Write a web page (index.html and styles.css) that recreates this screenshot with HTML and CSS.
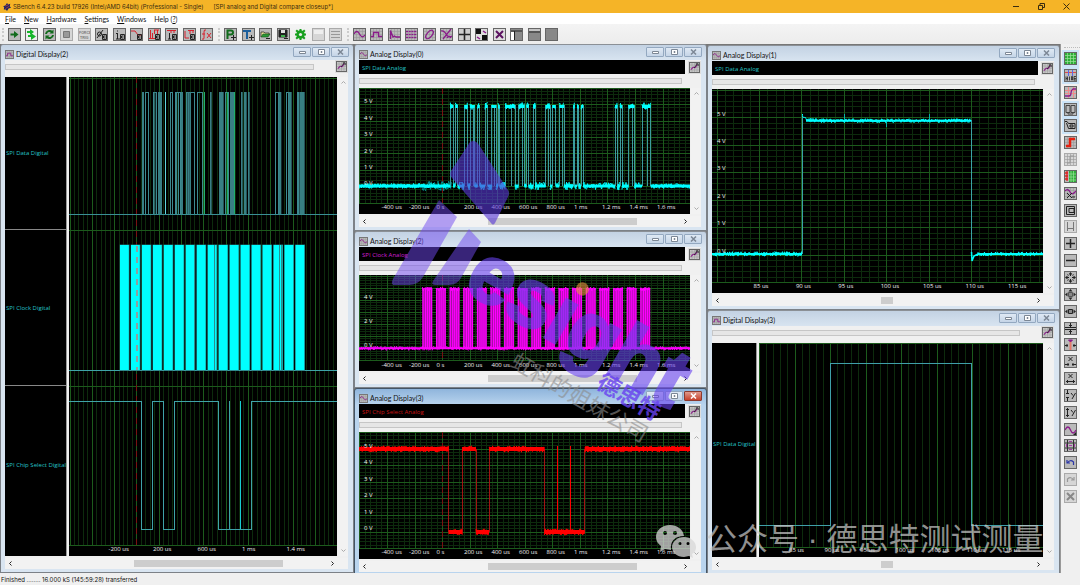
FILE: index.html
```html
<!DOCTYPE html>
<html lang="en">
<head>
    <meta charset="UTF-8">
    <meta name="viewport" content="width=device-width, initial-scale=1.0">
    <title>SBench 6.4.23</title>
    <link rel="stylesheet" href="styles.css">
</head>
<body>

    <!-- TITLE BAR -->
    <header class="app-title">
        <svg class="logo" viewBox="0 0 10 10"><path d="M5 0l1.500 2L9 1 8.500 4 10 6 7 7 5 10 3.500 8 1 8 1.500 5 0 4 3 3z" fill="#1c2563"/><path d="M3 4l4-2M3 7l5-3" stroke="#c33f3f"/></svg>
        <span class="app-name">SBench 6.4.23 build 17926 (Intel/AMD 64bit) (Professional - Single)</span>
        <span>[SPI analog and Digital compare closeup*]</span>
        <div class="app-buttons">
            <button aria-label="Minimize"><svg viewBox="0 0 7 7"><path d="M0 3.500h6"/></svg></button>
            <button aria-label="Restore"><svg viewBox="0 0 7 7"><path d="M.5 2.500h4v4h-4zM2 2V.5h4.500v4H5"/></svg></button>
            <button aria-label="Close"><svg viewBox="0 0 7 7"><path d="M.5.5l6 6M6.500.5l-6 6"/></svg></button>
        </div>
    </header>

    <!-- MENU -->
    <nav class="menu">
        <a href="#"><u>F</u>ile</a>
        <a href="#"><u>N</u>ew</a>
        <a href="#"><u>H</u>ardware</a>
        <a href="#"><u>S</u>ettings</a>
        <a href="#"><u>W</u>indows</a>
        <a href="#">Help (<u>?</u>)</a>
    </nav>

    <!-- TOOLBAR -->
    <div class="toolbar">
        <div class="group wide" data-icons="start loop refresh stop force calcA calcI calcCurve calcFft calcIr calcU calcFx"></div>
        <div class="group narrow" data-icons="newP newT open save gear blank lines"></div>
        <div class="group wide" data-icons="sine square decay bus ellipse eye quad checker closeAll layoutL layoutT layoutN"></div>
    </div>

    <!-- WORKSPACE -->
    <main class="main">
        <div class="workspace">
            <div class="column">
                <section class="window" data-title="Digital Display(2)" data-icon="square" data-chart="digital2"></section>
            </div>
            <div class="column three">
                <section class="window" data-title="Analog Display(0)" data-icon="sine" data-chart="analog0"></section>
                <section class="window" data-title="Analog Display(2)" data-icon="sine" data-chart="analog2"></section>
                <section class="window active" data-title="Analog Display(3)" data-icon="sine" data-chart="analog3"></section>
            </div>
            <div class="column two">
                <section class="window" data-title="Analog Display(1)" data-icon="sine" data-chart="analog1"></section>
                <section class="window" data-title="Digital Display(3)" data-icon="square" data-chart="digital3"></section>
            </div>
        </div>
        <aside class="dock">
            <div class="dock-group" data-icons="grid* hide* cross cursorBox* tag* step stepOff levels probe frame width plus minus zoomAll zoomBox zoomH zoomV marker xIn xOut yIn yOut wave pattern undo redo remove"></div>
        </aside>
    </main>

    <!-- STATUS BAR -->
    <footer class="status">Finished ........ 16.000 kS (145:59:28) transferred</footer>

    <!-- OVERLAY MARKS -->
    <div class="mark">
        <svg class="mark-shape" viewBox="0 0 130 150">
            <path d="M80 2q5-3 9 3l29 45q2 3 0 7l-13 26q-2 3-4 0L62 38q-3-3-1-7z" class="dark"/>
            <path d="M49 60l18 17-34 60q-5 8-14 8H5q-5 0-2-6z"/>
            <path d="M79 89l12 13-20 36q-4 7-12 7H45q-4 0-2-4z"/>
        </svg>
        <span class="mark-name">esıght</span>
        <span class="mark-dot"></span>
        <span class="mark-cn">德思特</span>
        <span class="mark-sub">虹科的姐妹公司</span>
    </div>
    <div class="account">
        <svg viewBox="0 0 42 36">
            <path fill-rule="evenodd" d="M15 1C7 1 1 6 1 13c0 4 2 7 5 9l-1 6 5-3 6 1C15 17 20 12 29 12 28 5 22 1 15 1zM10 7a2 2 0 1 1 0 4 2 2 0 0 1 0-4zm10 0a2 2 0 1 1 0 4 2 2 0 0 1 0-4z"/>
            <path fill-rule="evenodd" d="M29 13c-7 0-12 5-12 10s5 10 12 10l5-1 4 2-1-4c3-2 4-4 4-7 0-5-5-10-12-10zM25 18a1.500 1.500 0 1 1 0 3 1.500 1.500 0 0 1 0-3zm8 0a1.500 1.500 0 1 1 0 3 1.500 1.500 0 0 1 0-3z"/>
        </svg>
        <span>公众号 · 德思特测试测量</span>
    </div>

    <script src="script.js"></script>
</body>
</html>
```

FILE: styles.css
```css
* { margin: 0; padding: 0; box-sizing: border-box; }

body {
    height: 100vh; overflow: hidden; position: relative;
    display: flex; flex-direction: column;
    background: #f0f0f0; color: #111;
    font-family: "Open Sans", "Liberation Sans", sans-serif; font-size: 6px; line-height: 8px;
}

button { border: 0; background: none; font: inherit; display: block; }
svg { display: block; }

.app-title, .status { font-family: Inter, "Liberation Sans", sans-serif; }
.menu, .titlebar h2 { font-family: Lato, "Liberation Sans", sans-serif; font-size: 7px; }

/* TITLE BAR */
.app-title {
    height: 13px; background: #f5b427; color: #3a2c10;
    display: flex; align-items: center; gap: 10px; padding: 0 4px 0 3px;
}
.logo { width: 8px; height: 8px; margin-right: -8px; }
.app-buttons { margin-left: auto; display: flex; gap: 18px; padding-right: 6px; }
.app-buttons svg { width: 7px; height: 7px; fill: none; stroke: #3a2c10; }

/* MENU */
.menu {
    height: 11px; background: #fff; display: flex; align-items: center;
    gap: 8px; padding: 0 5px;
}
.menu a { color: #111; text-decoration: none; }

/* TOOLBAR */
.toolbar {
    height: 20px; display: flex; align-items: center; gap: 5px; padding-left: 2px;
    background: linear-gradient(#f4f4f4, #ececec);
}
.group { display: flex; justify-content: space-between; padding-left: 4px; border-left: 2px dotted #ccc; }
.wide { width: 211px; }
.narrow { width: 124px; }

.tool { width: 13px; height: 13px; border: 1px solid #666; background: #b9b9b9; }
.tool svg { width: 11px; height: 11px; fill: none; stroke: #222; }
.tool.off { border-color: #aaa; background: #d6d6d6; }
.tool.plain { border-color: transparent; background: none; }
.tool.on { outline: 2px solid #cce4f7; }
.tool text { stroke: none; font-family: "Liberation Sans", sans-serif; font-weight: bold; }

/* WORKSPACE */
.main { flex: 1; display: flex; min-height: 0; }
.workspace {
    flex: 1; display: grid; grid-template-columns: 354fr 353fr 353fr;
    background: #777; min-width: 0; overflow: hidden;
}
.column { display: grid; min-height: 0; min-width: 0; }
.three { grid-template-rows: 187fr 157fr 188fr; margin-bottom: -3px; }
.two { grid-template-rows: 265fr 264fr; padding-top: 1px; margin-bottom: -1px; }

.window {
    display: flex; flex-direction: column; min-height: 0; min-width: 0;
    border: 1px solid #7c8187; border-top-color: #8b9096; border-radius: 3px 3px 0 0;
    background: linear-gradient(#c3d2e3, #d9e5f1 16px);
    padding: 0 5px 3px 4px;
}
.window.active { background: linear-gradient(#8fb5dc, #b9d4ee 16px); border-color: #456; }

.titlebar { height: 15px; display: flex; align-items: center; padding-top: 3px; margin-right: -1px; }
.titlebar h2 { font-weight: normal; line-height: 9px; margin-left: 2px; flex: 1; }
.titlebar .tool { width: 9px; height: 9px; border-color: #777; }
.titlebar .tool svg { width: 7px; height: 7px; }
.win-button {
    width: 18px; height: 10px; margin: -4px 0 0 1px;
    border: 1px solid #93a8c0; border-radius: 1px;
    background: linear-gradient(#dfe9f4, #c5d5e7);
    display: flex; align-items: center; justify-content: center;
}
.win-button svg { width: 7px; height: 6px; fill: #fff; stroke: #7c8795; }
.active .win-button:last-child { background: linear-gradient(#e09a8c, #c8402a); border-color: #8c3a2e; }
.active .win-button:last-child svg { stroke: #fff; }

.client { flex: 1; min-height: 0; display: flex; flex-direction: column; background: #f0f0f0; }
.row { display: flex; align-items: center; }
.row .tool { width: 11px; height: 11px; margin: 0 1px 0 4px; background: #c8c8c8; outline: 1px solid #ddd; }
.row .tool svg { width: 9px; height: 9px; }
.caption { flex: 1; height: 14px; background: #000; padding: 4px 3px 2px; }
.progress { height: 6px; border: 1px solid #c6c6c6; background: #e6e6e6; }
.analog > .progress { margin: 4px 19px 4px 0; }
.digital .row { padding: 1px 0 5px; }
.digital .progress { flex: 1; margin-right: 18px; }

.plots { flex: 1; min-height: 0; display: flex; }
.names {
    width: 62px; margin-right: 2px; background: #000; border-right: 1px solid #999;
    display: grid; grid-template-rows: 153fr 156fr 170fr;
}
.names.single { width: 45px; grid-template-rows: 1fr; }
.names span { display: flex; align-items: center; padding-left: 1px; white-space: nowrap; border-bottom: 1px solid #888; }
.names span:last-child { border: 0; padding-bottom: 12px; }
.cyan { color: #25c3c8; }
.magenta { color: #d21fd2; }
.red { color: #cc1414; }

/* PLOT */
.plot { flex: 1; min-width: 0; position: relative; background: #000; overflow: hidden; }
.plot svg { position: absolute; width: 100%; height: 100%; fill: none; }
.plot path { vector-effect: non-scaling-stroke; }
.grid-minor { stroke: #0d2b0d; shape-rendering: crispEdges; }
.grid-major { stroke: #1c5a1c; shape-rendering: crispEdges; }
.trigger { stroke: #7a1212; stroke-dasharray: 6 5; shape-rendering: crispEdges; }
.edge { shape-rendering: crispEdges; }
.tick { position: absolute; color: #f2f2f2; white-space: nowrap; }
.tick.x { margin: -4px 0 0 -6px; }
.tick.y { left: 5px; margin-top: -4px; }

/* SCROLLBARS */
.vscroll { width: 10px; margin-left: 1px; display: flex; flex-direction: column; justify-content: space-between; align-items: center; padding: 3px 0; background: #f2f2f2; }
.hscroll { height: 11px; margin-top: 2px; display: flex; align-items: center; padding-right: 10px; background: #f2f2f2; }
.vscroll svg { width: 5px; height: 5px; fill: none; stroke: #aaa; }
.hscroll svg { width: 5px; height: 5px; fill: none; stroke: #222; }
.hscroll button { padding: 0 3px; }
.track { flex: 1; height: 7px; }
.thumb { height: 7px; background: #cdcdcd; }

/* DOCK */
.dock { width: 20px; padding: 3px 0 0 3px; border-left: 1px solid #999; background: #f0f0f0; }
.dock-group {
    height: 456px; display: flex; flex-direction: column; justify-content: space-between;
    border-top: 1px dotted #bbb; padding-top: 4px;
}

/* STATUS BAR */
.status { height: 12px; padding: 3px 1px 0; }

/* OVERLAY MARKS */
.mark, .account { position: absolute; pointer-events: none; white-space: nowrap; }
.mark { left: 390px; top: 140px; color: #6842f0; }
.mark-shape { width: 130px; height: 150px; fill: rgba(112, 72, 240, .5); }
.mark-shape .dark { fill: rgba(88, 56, 215, .62); }
.mark span { position: absolute; transform-origin: 0 0; transform: rotate(30deg); opacity: .6; }
.mark-name { left: 106px; top: 88px; font: bold 82px/84px "Liberation Sans", sans-serif; -webkit-text-stroke: 3px #6842f0; }
.mark-dot { left: 190px; top: 140px; width: 13px; height: 13px; border-radius: 50%; background: #ec923e; }
.mark .mark-cn { left: 216px; top: 228px; font: bold 23px/24px "Noto Sans CJK SC", sans-serif; opacity: .8; }
.mark .mark-sub { left: 130px; top: 207px; font: 22px/24px "Noto Sans CJK SC", sans-serif; color: #8c8c8c; }
.account {
    left: 655px; top: 520px; display: flex; align-items: center; gap: 9px;
    color: rgba(200, 200, 200, .72); font: 31px/40px "Liberation Sans", "Noto Sans CJK SC", sans-serif;
}
.account svg { width: 42px; height: 36px; fill: rgba(215, 215, 215, .75); margin-top: 4px; }
```

FILE: script.js
```js
// Toolbar and window icons, drawn on an 11 x 11 grid
const mesh = '<path d="M2.500 0v11M5.500 0v11M8.500 0v11M0 2.500h11M0 5.500h11M0 8.500h11" stroke="#999" stroke-width=".6"/>';
const badge = '<path d="M6.500 5.500h4v5h-4zM9.500 7h-2v2h2" stroke-width="1"/>';
const red = 'stroke="#d8232f"';
const purple = 'stroke="#8a1b8a" stroke-width="1.300"';

const icons = {
    start: '<path d="M1.500 4.500H5V2l4.500 3.500L5 9V6.500H1.500z" fill="#126b1c" stroke="none"/>',
    loop: '<path d="M0 0h11v11H0z" fill="#eee" stroke="none"/><path d="M1 2h3V0l4 3-4 3V4H1zM2 6h3V4l5 3.500L5 11V8H2z" fill="#15b52a" stroke="none"/>',
    refresh: '<path d="M2 5a3.500 3.500 0 0 1 6-2M9 6a3.500 3.500 0 0 1-6 2" stroke="#126b1c" stroke-width="2"/><path d="M9.500.5v4h-4zM1.500 10.500v-4h4z" fill="#126b1c" stroke="none"/>',
    stop: '<path d="M2.500 2.500h6v6h-6z" fill="#999" stroke="#777"/>',
    force: '<text x="0" y="5" font-size="3.500" fill="#777">FORCE</text><text x="1" y="9.500" font-size="3.500" fill="#777">TRIG</text>',
    calcA: '<path d="M1 9L7 1M1.500 5a2 2 0 1 0 4 0 2 2 0 0 0-4 0"/>' + badge,
    calcI: '<path d="M3.500 4v6M2 4.500h2M2 10h4M3 2h1"/>' + badge,
    calcCurve: `<path d="M0 2h4l3 4h4" ${red}/>` + badge,
    calcFft: `<path d="M1.500 1v8M3.500 4v5M0 9.500h6M5 1h5M5.500 1v4M8.500 1v4" ${red}/>` + badge,
    calcIr: `<path d="M3.500 4v6M2 10h3"/><path d="M1 1.500h9M5 1v3M8 1v3" ${red}/>` + badge,
    calcU: `<path d="M1 2v7h4M4 1.500h6M6 1v4M9 1v3" ${red}/>` + badge,
    calcFx: `<path d="M1 5h3M5 1q-2-1-2 2v6q0 2-2 1M6 4l4 5M10 4L6 9" ${red}/>`,
    newP: '<path d="M2.500 10V1.500H6q2 0 2 2t-2 2H3" stroke="#126b1c" stroke-width="2"/><path d="M8.500 6v5M6 8.500h5"/>',
    newT: '<path d="M0 2h8M4 1v9" stroke="#1c5f9c" stroke-width="2"/><path d="M8.500 6v5M6 8.500h5"/>',
    open: '<path d="M1 8V3h3l1 1h4v2" fill="#e9e19a" stroke-width=".7"/><path d="M1 8l2-3h7L8 8z" fill="#2a9a36" stroke="#174d1c" stroke-width=".6"/><path d="M6 9.500h4"/>',
    save: '<path d="M1 1h8v7H1z" fill="#222"/><path d="M3 1h4v3H3z" fill="#ddd" stroke="none"/><path d="M3 6h4v2H3z" fill="#3fae4a" stroke="none"/><path d="M6 9.500h4" stroke="#222"/>',
    gear: '<path d="M5.500-.5v12M-.5 5.500h12M1.200 1.200l8.600 8.600M9.800 1.200L1.200 9.800" stroke="#18a01f" stroke-width="2"/><circle cx="5.500" cy="5.500" r="3" stroke="#18a01f" stroke-width="2.500"/><circle cx="5.500" cy="5.500" r="1.600" fill="#eee" stroke="none"/>',
    blank: '<path d="M1 1h9v4H1z" fill="#eee" stroke="none"/>',
    lines: '<path d="M1 2.500h9M1 5.500h9M1 8.500h9" stroke="#999"/>',
    sine: mesh + `<path d="M0 5q3-5 5.500 0T11 6" ${purple}/>`,
    square: mesh + `<path d="M0 7.500h2.500v-4h5v4H11" ${purple}/>`,
    decay: mesh + `<path d="M1.500 10V1.500L4 8l1.500-1L7 8h4" ${purple}/>`,
    bus: mesh + `<path d="M0 2.500h11M0 5.500h11M0 8.500h11" ${purple} stroke-dasharray="2 .7"/>`,
    ellipse: mesh + `<ellipse cx="5.500" cy="5.500" rx="5" ry="2.500" transform="rotate(-50 5.500 5.500)" ${purple}/>`,
    eye: mesh + `<path d="M0 2q3-1 5 3t6 2M10 0L2 10M6 9q2-3 4 0" ${purple}/>`,
    quad: '<path d="M0 0h11v11H0z" fill="#ccc" stroke="none"/><path d="M5.500 0v11M0 5.500h11" stroke-width="1.600"/>',
    checker: '<path d="M0 0h11v11H0z" fill="#ddd" stroke="none"/><path d="M0 0h5v5H0zM6 6h5v5H6z" fill="#111" stroke="none"/><path d="M7 2l3 2M1 8l3 2" stroke="#8a1b8a" stroke-width="1.500"/>',
    closeAll: '<path d="M0 0h11v11H0z" fill="#ddd" stroke="none"/><path d="M2 2l7 7M9 2L2 9" stroke="#5b1260" stroke-width="2"/>',
    layoutL: '<path d="M0 0h11v11H0z" fill="#888" stroke="none"/><path d="M0 3h3v8H0z" fill="#fff" stroke="none"/><path d="M0 2h11M3.500 2v9" />',
    layoutT: '<path d="M0 0h11v11H0z" fill="#888" stroke="none"/><path d="M0 1h11" stroke="#fff"/><path d="M0 3h11"/>',
    layoutN: '<path d="M0 0h11v11H0z" fill="#888" stroke="none"/>',
    grid: '<path d="M0 0h11v11H0z" fill="#2fae38" stroke="none"/><path d="M2.500 0v11M5.500 0v11M8.500 0v11M0 2.500h11M0 5.500h11M0 8.500h11" stroke="#9be29b" stroke-width=".7"/>',
    hide: '<path d="M0 2.500h11" stroke="#e04a4a"/><path d="M3.500 0v6M7.500 0v6" stroke="#5968e8"/><path d="M1 6.500v4M1 8.500h1.500M2.500 6.500v4M4.500 6.500v4M6.500 6.500h1v3.500h-1zM9 6.500h2M9 8.500h2M9 10h2M9 6.500v4" stroke-width=".8"/>',
    cross: '<path d="M0 3.500h11M0 6.500h11M3.500 0v11M8.500 0v11" stroke="#f08a8a"/>' + `<path d="M0 9h4q2 0 2-3t2-4h3" ${purple}/>`,
    cursorBox: '<path d="M1 1.500h4v7H1zM6 1.500h4v7H6zM3 8v2h5V8" stroke="#444"/>',
    tag: '<path d="M0 1.500h2l1.500 2H10v5H3.500L1.500 3M5 5h3v2H5z"/>',
    step: mesh + '<path d="M1 9h4V2h5" stroke="#e5200e" stroke-width="2.500"/>',
    stepOff: mesh + '<path d="M2 9h3V2h4" stroke="#999"/>',
    levels: '<path d="M4 0h7v11H4z" fill="#2fae38" stroke="none"/><path d="M6 0v11M8.500 0v11M4 3h7M4 6h7M4 9h7" stroke="#9be29b" stroke-width=".7"/><path d="M0 2h3M0 5h3M0 8h3M2 0v10" stroke="#e02020" stroke-width="1.300"/>',
    probe: mesh + `<path d="M0 3q3-3 5 1t6-1" ${purple}/><path d="M2 5l5 5M7 5l-5 5M7 9h3"/>`,
    frame: '<path d="M1.500 1.500h8v8h-8zM4 3.500h5v4H4z"/>',
    width: '<path d="M2.500 1v9M8.500 1v9M3 7.500h5" stroke="#777"/>',
    plus: '<path d="M5.500 1v9M1 5.500h9" stroke-width="1.500"/>',
    minus: '<path d="M1 5.500h9" stroke-width="1.500"/>',
    zoomAll: '<path d="M5.500 0l2 2.500h-4zM5.500 11l-2-2.500h4zM0 5.500l2.500-2v4zM11 5.500l-2.500-2v4z" fill="#222" stroke="none"/><path d="M5.500 2v2M5.500 7v2M2 5.500h2M7 5.500h2"/><path d="M2.500 2.500l1 1M8.500 2.500l-1 1M2.500 8.500l1-1M8.500 8.500l-1-1"/>',
    zoomBox: '<path d="M3.500 3.500h4v4h-4z" fill="#888" stroke="#555"/><path d="M5.500 0l2 2.500h-4zM5.500 11l-2-2.500h4zM0 5.500l2.500-2v4zM11 5.500l-2.500-2v4z" fill="#222" stroke="none"/>',
    zoomH: '<path d="M3.500 3.500h4v4h-4z" fill="#888"/><path d="M0 5.500l2.500-2v4zM11 5.500l-2.500-2v4z" fill="#222" stroke="none"/>',
    zoomV: '<path d="M0 4.500h11M0 6.500h11M5.500 0v4M5.500 7v4M4 2.500h3M4 8.500h3"/>',
    marker: '<path d="M5.500 2v9" stroke="#e87a6a" stroke-width="2"/><path d="M3.500 1h4L5.500 3z" fill="#8a1b8a" stroke="#8a1b8a"/><path d="M0 6.500h3M8 6.500h3M2 5v3M9 5v3"/>',
    xIn: '<path d="M3.500 1l4 4M7.500 1l-4 4M0 8.500h4M7 8.500h4M3 7v3M8 7v3"/>',
    xOut: '<path d="M3.500 1l4 4M7.500 1l-4 4M1 8.500h9M2.500 7v3M8.500 7v3"/>',
    yIn: '<path d="M2.500 0v4M2.500 7v4M1 3.500h3M1 7.500h3M6 3l2 2.500M10.500 3L7 9"/>',
    yOut: '<path d="M2.500 1v9M1 2.500h3M1 8.500h3M6 3l2 2.500M10.500 3L7 9"/>',
    wave: `<path d="M0 6q3-6 5.500 0T11 6" ${purple}/><path d="M8 11h3V8z" fill="#222" stroke="none"/>`,
    pattern: '<path d="M2.500 0v11M8.500 0v11M0 3h11M0 8h11" stroke="#333"/><path d="M4 1.500h3M4 9.500h3M1.500 4v3M9.500 4v3M4 5.500h3" stroke="#a33ba3"/>',
    undo: '<path d="M2 3v3h3M2.500 6Q5 2 8.500 5v3" stroke="#2b36a8" stroke-width="1.200"/>',
    redo: '<path d="M9 3v3H6M8.500 6Q6 2 2.500 5v3" stroke="#999" stroke-width="1.200"/>',
    remove: '<path d="M2 2l7 7M9 2L2 9" stroke="#888" stroke-width="2"/>',
    options: mesh + `<path d="M1 8l3-3 2 1 3-4" ${purple}/><path d="M7 1h3v3M5 6l4-5"/>`
};
const off = ['stop', 'force', 'blank', 'lines', 'stepOff', 'width', 'redo', 'remove'];

function tool(name, on) {
    const state = (off.includes(name) ? ' off' : '') + (name === 'gear' ? ' plain' : '') + (on ? ' on' : '');
    return `<button class="tool${state}" aria-label="${name}"><svg viewBox="0 0 11 11">${icons[name]}</svg></button>`;
}

document.querySelectorAll('[data-icons]').forEach(el => {
    el.innerHTML = el.dataset.icons.split(' ').map(n => tool(n.replace('*', ''), n.endsWith('*'))).join('');
});

// Repeatable noise so the traces look the same on each load
let seed = 7;
function rnd() {
    seed = (seed * 16807) % 2147483647;
    return seed / 2147483647;
}
function noise(x0, x1, y, amp, step = 0.5) {
    let d = '';
    for (let x = x0; x <= x1; x += step) d += `${d ? 'L' : 'M'}${x.toFixed(1)} ${(y + (rnd() - 0.5) * 2 * amp).toFixed(1)}`;
    return d;
}
const path = (d, color, width = 1, cls = '') => `<path class="${cls}" d="${d}" stroke="${color}" stroke-width="${width}"/>`;
const third = (list, base) => list.map(p => p.map(v => base + v / 3));

// Pulses as [start, end, filled]
function digitalData() {
    const p = [[426, 432, 1], [436, 446], [460, 470], [463, 466, 1], [474, 486, 1], [510, 518], [526, 540], [530, 534], [543, 549, 1],
        [558, 584], [562, 568, 1], [568, 573, 1], [592, 608], [630, 635, 1], [657, 671, 1], [675, 684], [690, 705, 1], [723, 728, 1], [732, 740, 1],
        [744, 749, 1], [826, 834], [836, 844, 1], [858, 866], [866, 875, 1], [891, 896], [898, 914, 1]];
    let out = path('M69 214.500H337', '#3a8f95', 1, 'edge');
    p.forEach(([a, b, fill]) => {
        a /= 3; b /= 3;
        out += fill ? `<rect x="${a}" y="92" width="${b - a}" height="122" fill="#387f84"/>`
            : path(`M${a} 214V92.500H${b}V214`, '#3d8a90', 1, 'edge');
    });
    out += path('M165.500 92V214', '#5fd6dc', 1, 'edge') + path('M204.500 92V214', '#1faf6c', 1, 'edge');
    return out + path('M227.500 92V214M234.500 92V214', '#1faf6c', 1, 'edge');
}
function digitalClock() {
    let out = path('M69 370.500H337', '#3fa3a8', 1, 'edge');
    for (let i = 0; i < 17; i++) {
        const x = 119.700 + i * 10.970;
        out += `<rect x="${x}" y="244.500" width="9.800" height="126" fill="#1f6f70"/><rect x="${x + 0.3}" y="245" width="8.800" height="125" fill="#0ff"/>`;
    }
    return out + path('M194 245V370M214.500 245V370M279.500 245V370M281.500 245V370', '#2a8f90', 1, 'edge')
        + path('M137 246V370', '#8f9f9f', 1.500, 'edge').replace('<path', '<path stroke-dasharray="6 5"');
}
function analogPulses() {
    const p = third([[301, 309], [316, 323], [343, 353], [360, 374], [383, 389], [405, 413], [425, 438], [444, 449], [466, 495], [506, 523],
        [530, 536], [550, 556], [587, 600], [607, 617], [628, 642], [670, 674], [681, 686], [693, 699], [795, 802], [810, 816], [836, 853], [876, 902]], 350);
    let edges = '', tops = '', base = '', solid = '', x = 359;
    p.forEach(([a, b]) => {
        edges += `M${a} 186V105H${b}V186`;
        if (b - a > 4) edges += `M${(a + b) / 2 + 1} 186V105`;
        tops += noise(a, b, 106, 3.500);
        base += noise(x, a, 186, x < 360 ? 1.500 : 4);
        solid += `M${x} 186H${a}M${a} 106.500H${b}`;
        x = b;
    });
    solid += `M${x} 186H691`;
    return path(edges, '#3c9c9e', 1, 'edge') + path(noise(422, 452, 186, 5, .7), '#0aa', .7)
        + path(solid, '#0ff', 3) + path(tops + base, '#0ff', 1) + path(noise(x, 691, 186, 2.500), '#0ff')
        + path(noise(359, 450, 186, 2.500), '#0ff');
}
function clockBursts() {
    let lines = '', tops = '', glow = '';
    for (let i = 0; i < 17; i++) {
        const a = 422.500 + i * 13.620;
        glow += `<rect x="${a}" y="287" width="9.800" height="60" fill="#a010a0"/>`;
        [0.5, 3, 5, 7, 9].forEach(o => lines += `M${a + o} 347V287`);
        tops += noise(a, a + 9.800, 288, 2);
    }
    return glow + path(lines, '#f0f', 1.300) + path(tops, '#f0f')
        + path('M359 347.300H691', '#f0f', 2) + path(noise(359, 691, 347.300, 2), '#f0f', .8);
}
function chipSelect() {
    const hi = third([[27, 296], [337, 378], [417, 583], [704, 1022]], 350);
    const lo = third([[296, 337], [378, 417], [583, 704]], 350);
    let d = '', e = '', solid = '';
    hi.forEach(([a, b]) => { d += noise(a, b, 449, 3.200, .4); solid += `M${a} 449H${b}`; });
    lo.forEach(([a, b]) => { d += noise(a, b, 532, 3.200, .4); solid += `M${a} 532H${b}`; e += `M${a} 449V532M${b} 449V532`; });
    return path(e, '#a31414', 1, 'edge') + path('M557.500 446V532M570.500 446V532', '#f00')
        + path(solid, '#f00', 4) + path(d, '#f00');
}
function dataPulse() {
    let top = 'M802.500 114';
    for (let x = 802.500; x < 971; x += .5) top += `L${x} ${(120.700 - 5 * Math.exp((802 - x) / 5) + (rnd() - .5) * 4).toFixed(1)}`;
    return path('M802.500 254V116M971.500 120V258', '#3aa3a6', 1, 'edge') + path(top, '#0ff')
        + path('M712 254H802M806 120.700H971M978 254H1044', '#0ff', 2)
        + path(noise(712, 802, 254, 2.300), '#0ff') + path('M971.500 252L972 261L974 256L978 254', '#0ff', 1.500) + path(noise(976, 1044, 254, 2), '#0ff')
        + path('M844.500 114v6M929.500 114v6M886.500 121v6', '#0cc', .8);
}

// One entry per display; box is [x, y, width, height] of the drawing area
const timeTicks = [['-400 us', 387.500], ['-200 us', 415], ['0 s', 442.500], ['200 us', 470], ['400 us', 497.500], ['600 us', 525], ['800 us', 552.500], ['1 ms', 580], ['1.2 ms', 608], ['1.4 ms', 635.500], ['1.6 ms', 663]];
const volts = (top, step, n, by = 1) => Array.from({ length: n }, (_, i) => [`${(n - 1 - i) * by} V`, top + i * step]);
const charts = {
    digital2: {
        box: [69, 77, 268, 479], names: ['SPI Data Digital', 'SPI Clock Digital', 'SPI Chip Select Digital'], bottom: 545,
        gx: [92.300, 22.300], lines: [78, 230.500, 386.500], trigger: 136.500, labelY: 549.500, thumb: [38, 48],
        ticks: [['-200 us', 114.500], ['200 us', 159], ['600 us', 203.500], ['1 ms', 248], ['1.4 ms', 292.500]],
        draw: () => digitalData() + digitalClock() + path('M69 401.500H141.500V529.500H152.500V401.500H163.500V529.500H174.500V401.500H218.500V529.500H251.500V401.500H337M229.500 401V529', '#3fa3a8', 1, 'edge') + path('M240.500 401V529', '#18cdd2', 1, 'edge')
    },
    analog0: {
        box: [359, 88, 331, 126], caption: 'SPI Data Analog', color: 'cyan', bottom: 203, gx: [387.500, 27.550], gy: [186.600, 16.400],
        trigger: 442.500, ticks: timeTicks, labelY: 207.500, volts: volts(101.500, 16.400, 6), thumb: [38, 48], draw: analogPulses
    },
    analog2: {
        box: [359, 274, 331, 96], caption: 'SPI Clock Analog', color: 'magenta', bottom: 359, gx: [387.500, 27.550], gy: [347.600, 12.100],
        trigger: 442.500, ticks: timeTicks, labelY: 363.500, volts: volts(295.500, 24.200, 3, 2), thumb: [38, 48], draw: clockBursts
    },
    analog3: {
        box: [359, 432, 331, 127], caption: 'SPI Chip Select Analog', color: 'red', bottom: 548, gx: [387.500, 27.550], gy: [532, 16.600],
        trigger: 442.500, ticks: timeTicks, labelY: 552.500, volts: volts(445.500, 16.600, 6), thumb: [38, 48], draw: chipSelect
    },
    analog1: {
        box: [712, 89, 331, 204], caption: 'SPI Data Analog', color: 'cyan', bottom: 282, gx: [717, 42.400], gy: [255, 27.500],
        ticks: [85, 90, 95, 100, 105, 110, 115].map((t, i) => [t + ' us', 759.500 + i * 42.400]),
        labelY: 286.500, volts: volts(113.500, 27.500, 6), thumb: [51, 4], draw: dataPulse
    },
    digital3: {
        box: [759, 343, 284, 214], names: ['SPI Data Digital'], bottom: 547, gx: [759.500, 35.500], lines: [343.500],
        ticks: [85, 90, 95, 100, 105, 110, 115].map((t, i) => [t + ' us', 795 + i * 35.500]), labelY: 550.500, thumb: [51, 4],
        draw: () => path('M759 525.500H830.500V363.500H971.500V525.500H1043', '#3f9fa8', 1, 'edge')
    }
};

function plot(c) {
    const [x, y, w, h] = c.box;
    let minor = '', major = `M${x} ${c.bottom}H${x + w}`;
    for (let i = -20; i < 80; i++) {
        const gx = c.gx[0] + i * c.gx[1] / 5;
        if (gx >= x && gx < x + w) {
            if (i % 5) minor += `M${gx} ${y}V${c.bottom}`;
            else major += `M${gx} ${y}V${c.bottom}`;
        }
        if (!c.gy) continue;
        const gy = c.gy[0] - i * c.gy[1] / 5;
        if (gy >= y && gy < c.bottom) {
            if (i % 5) minor += `M${x} ${gy}H${x + w}`;
            else major += `M${x} ${gy}H${x + w}`;
        }
    }
    (c.lines || []).forEach(l => major += `M${x} ${l}H${x + w}`);
    const left = v => ((v - x) / w * 100).toFixed(2);
    const top = v => ((v - y) / h * 100).toFixed(2);
    return `<div class="plot"><svg viewBox="${c.box.join(' ')}" preserveAspectRatio="none">
        <path class="grid-minor" d="${minor}"/><path class="grid-major" d="${major}"/>
        ${c.trigger ? `<path class="trigger" d="M${c.trigger} ${y}V${c.bottom}"/>` : ''}${c.draw()}</svg>
        ${c.ticks.map(t => `<span class="tick x" style="left:${left(t[1])}%;top:${top(c.labelY)}%">${t[0]}</span>`).join('')}
        ${(c.volts || []).map(t => `<span class="tick y" style="top:${top(t[1])}%">${t[0]}</span>`).join('')}</div>`;
}

document.querySelectorAll('.window').forEach(el => {
    const c = charts[el.dataset.chart];
    const head = c.names
        ? `<div class="row"><div class="progress"></div>${tool('options')}</div>`
        : `<div class="row"><div class="caption ${c.color}">${c.caption}</div>${tool('options')}</div><div class="progress"></div>`;
    const names = c.names ? `<div class="names cyan${c.names.length === 1 ? ' single' : ''}">${c.names.map(n => `<span>${n}</span>`).join('')}</div>` : '';
    el.innerHTML = `<header class="titlebar">${tool(el.dataset.icon)}<h2>${el.dataset.title}</h2>
        <button class="win-button" aria-label="Minimize"><svg viewBox="0 0 7 6"><path d="M.5 2.500h6v2h-6z"/></svg></button>
        <button class="win-button" aria-label="Maximize"><svg viewBox="0 0 7 6"><path d="M.5.5h6v5h-6zM3 2.500h1v1H3z"/></svg></button>
        <button class="win-button" aria-label="Close"><svg viewBox="0 0 7 6"><path d="M1 .5l5 5M6 .5l-5 5" stroke-width="1.500"/></svg></button></header>
        <div class="client ${c.names ? 'digital' : 'analog'}">${head}
        <div class="plots">${names}${plot(c)}<div class="vscroll">
        <svg viewBox="0 0 5 5"><path d="M.5 3.500l2-2 2 2"/></svg><svg viewBox="0 0 5 5"><path d="M.5 1.500l2 2 2-2"/></svg></div></div>
        <div class="hscroll"><button aria-label="Scroll left"><svg viewBox="0 0 5 5"><path d="M3.500.5l-2 2 2 2"/></svg></button>
        <div class="track"><div class="thumb" style="margin-left:${c.thumb[0]}%;width:${c.thumb[1]}%"></div></div>
        <button aria-label="Scroll right"><svg viewBox="0 0 5 5"><path d="M1.500.5l2 2-2 2"/></svg></button></div></div>`;
});
```
